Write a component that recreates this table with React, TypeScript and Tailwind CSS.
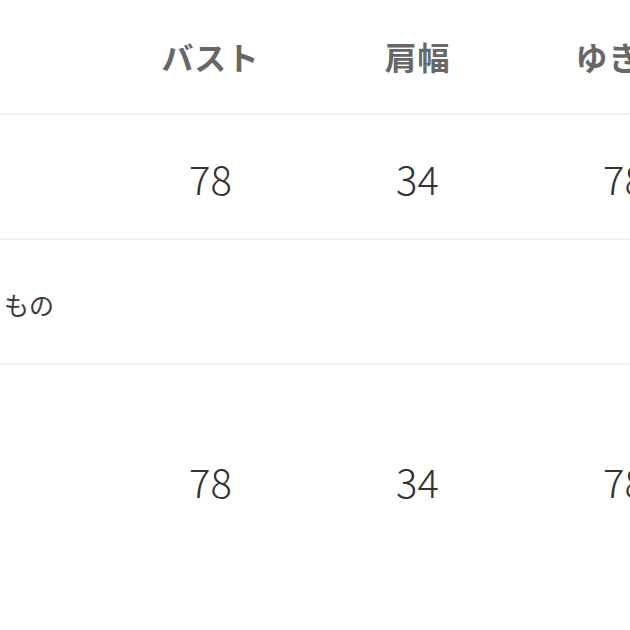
const columns = ["バスト", "肩幅", "ゆき丈"];

const rows: { label: string; values: string[] }[] = [{ label: "", values: ["78", "34", "78"] }];

const FONT = "font-['Noto_Sans_CJK_JP','Noto_Sans',sans-serif]";

function Cell({ children, className = "" }: { children?: React.ReactNode; className?: string }) {
  return <div className={`w-[207px] shrink-0 text-center ${className}`}>{children}</div>;
}

export default function App() {
  return (
    <div className={`h-[630px] w-[630px] overflow-hidden bg-white ${FONT}`}>
      {/* Header */}
      <div className="flex h-[115px] items-center border-b-2 border-[#f0f0f0] pb-[2px]">
        <div className="w-[107px] shrink-0" />
        {columns.map((c) => (
          <Cell key={c} className="text-[32px] font-bold leading-none tracking-[0.02em] text-[#676767]">
            {c}
          </Cell>
        ))}
      </div>

      {/* Row 1 */}
      {rows.map((r, i) => (
        <div key={i} className="flex h-[125px] items-center border-b-2 border-[#f2f2f2] pt-[3px]">
          <div className="w-[107px] shrink-0">{r.label}</div>
          {r.values.map((v, j) => (
            <Cell key={j} className="text-[40px] font-light leading-none text-[#333]">
              {v}
            </Cell>
          ))}
        </div>
      ))}

      {/* Note row */}
      <div className="flex h-[125px] items-center border-b-2 border-[#f2f2f2] pl-[4px] pt-[5px]">
        <span className="text-[25px] font-normal leading-none text-[#3a3a3a]">もの</span>
      </div>

      {/* Row 2 */}
      <div className="flex h-[236px] items-center pb-[4px]">
        <div className="w-[107px] shrink-0" />
        {["78", "34", "78"].map((v, j) => (
          <Cell key={j} className="text-[40px] font-light leading-none text-[#333]">
            {v}
          </Cell>
        ))}
      </div>
    </div>
  );
}
